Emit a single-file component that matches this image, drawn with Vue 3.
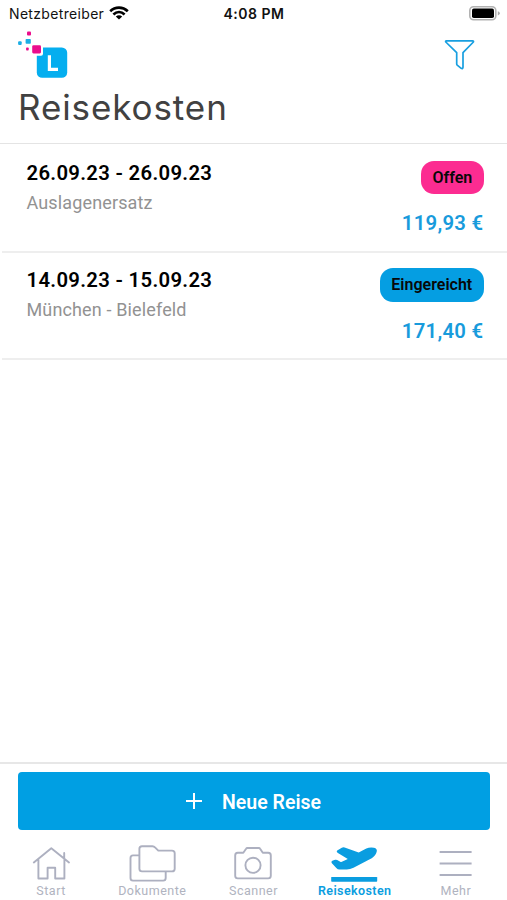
<script setup>
const trips = [
  { dates: '26.09.23 - 26.09.23', place: 'Auslagenersatz', status: 'Offen', kind: 'open', amount: '119,93 €' },
  { dates: '14.09.23 - 15.09.23', place: 'München - Bielefeld', status: 'Eingereicht', kind: 'submitted', amount: '171,40 €' },
]
</script>

<template>
  <div class="screen">
    <div class="status">
      <div class="carrier">
        <span>Netzbetreiber</span>
        <svg width="20" height="14" viewBox="0 0 20 14">
          <g fill="none" stroke="#000" stroke-width="2.7">
            <path d="M1.2 5.2C6.2.5 13.8.5 18.8 5.2" />
            <path d="M4.4 8.4C7.7 5.4 12.3 5.4 15.6 8.4" />
          </g>
          <path d="M6.8 10.4Q10 8 13.2 10.4L10 13.6Z" />
        </svg>
      </div>
      <span class="time">4:08 PM</span>
      <svg class="battery" width="32" height="15" viewBox="0 0 32 15">
        <rect x=".8" y=".8" width="26" height="13" rx="3.8" fill="#fff" stroke="#b2b2b2" stroke-width="1.6" />
        <rect x="3" y="2.6" width="22" height="9.4" rx="1.8" fill="#000" />
        <path d="M28.8 5.2Q30.8 5.7 30.8 7.3T28.8 9.4Z" fill="#aaa" />
      </svg>
    </div>

    <header class="header">
      <div class="brand">
        <svg width="52" height="49" viewBox="0 0 52 49">
          <rect x="18.8" y="17.4" width="30.4" height="30.4" rx="5.4" fill="#05aeef" />
          <rect x="12.4" y="14" width="12.6" height="11.8" rx="2" fill="#fff" />
          <rect x="14.2" y="15.2" width="8.8" height="8.2" rx="1.3" fill="#eb0c8c" />
          <rect x="9" y="1.6" width="4" height="4" rx="1" fill="#eb0c8c" />
          <rect x="7.6" y="9" width="5.2" height="4.8" rx=".8" fill="#1caee5" />
          <rect x=".1" y="11.3" width="3.6" height="3.6" rx="1" fill="#1caee5" />
          <rect x="8.1" y="17.6" width="2.6" height="2.8" rx=".7" fill="#eb0c8c" />
          <path d="M31.4 25.2V39.4H40" fill="none" stroke="#fff" stroke-width="3.2" />
        </svg>
        <svg class="filter" width="32" height="32" viewBox="0 0 32 32">
          <path d="M2.4 1.8H28.6Q29.9 1.8 29.4 3L19 13.7V28.1Q18.8 30.2 17.2 29.3L13.2 26.2Q12.7 25.8 12.7 25V13.7L1.8 3Q1.2 1.8 2.4 1.8Z" fill="none" stroke="#189fe0" stroke-width="1.7" stroke-linejoin="round" />
        </svg>
      </div>
      <h1>Reisekosten</h1>
    </header>

    <main class="list">
      <article v-for="trip in trips" :key="trip.dates" class="trip">
        <div class="info">
          <div class="dates">{{ trip.dates }}</div>
          <div class="place">{{ trip.place }}</div>
        </div>
        <div class="side">
          <span class="badge" :class="trip.kind">{{ trip.status }}</span>
          <span class="amount">{{ trip.amount }}</span>
        </div>
      </article>
    </main>

    <footer class="footer">
      <button class="new">
        <svg width="16" height="16" viewBox="0 0 16 16"><path d="M8 0V16M0 8H16" stroke="#fff" stroke-width="2" /></svg>
        <span>Neue Reise</span>
      </button>
      <nav class="tabs">
        <a class="tab">
          <svg width="40" height="38" viewBox="0 0 40 38">
            <g fill="none" stroke="#adb0c0" stroke-width="1.9" stroke-linejoin="round" stroke-linecap="round">
              <path d="M2.8 18.4L20.3 4.3L38 18.4M7.4 15.4V34.5H16.6V23.8H24.2V34.5H33.4V15.4M33.2 14.2V9" />
            </g>
          </svg>
          <span>Start</span>
        </a>
        <a class="tab">
          <svg width="48" height="38" viewBox="0 0 48 38">
            <g fill="none" stroke="#adb0c0" stroke-width="1.9" stroke-linejoin="round">
              <path d="M11.2 11.4H5Q2.5 11.4 2.5 14V34Q2.5 36.6 5 36.6H35.2Q37.7 36.6 37.7 34V27.4" />
              <path d="M14 2.2H24.4Q26 2.2 27 3.4L30.3 6.6H44Q46.7 6.6 46.7 9.3V24.7Q46.7 27.4 44 27.4H14Q11.4 27.4 11.4 24.8V4.8Q11.4 2.2 14 2.2Z" />
            </g>
          </svg>
          <span>Dokumente</span>
        </a>
        <a class="tab">
          <svg width="40" height="38" viewBox="0 0 40 38">
            <g fill="none" stroke="#adb0c0" stroke-width="1.9" stroke-linejoin="round">
              <path d="M4.7 8.8H10.3L13.1 4.7Q13.5 4 14.4 4H25.8Q26.7 4 27.1 4.7L29.8 8.8H35.2Q37.8 8.8 37.8 11.4V31.8Q37.8 34.4 35.2 34.4H4.7Q2.2 34.4 2.2 31.8V11.4Q2.2 8.8 4.7 8.8Z" />
              <circle cx="20" cy="21.3" r="7.6" />
            </g>
          </svg>
          <span>Scanner</span>
        </a>
        <a class="tab active">
          <svg width="48" height="38" viewBox="0 0 48 38">
            <path d="M7.2 6.6L11.8 3.7Q13 3 14.6 3.5L28.7 8.4L36.3 4.6Q39.7 3 44 3.8Q47.5 4.6 46.7 7.8Q45.8 11.6 41.7 14.2L23.5 23.8Q20 25.6 16.8 25.6H9.7Q7.6 25.6 6.3 24L1.7 19Q.8 17.6 2.3 16.8L5.1 15.8Q6.1 15.4 7.2 16L10.3 17.7Q11.3 18.2 12.4 17.6L17.8 15L7.5 8.8Q6 7.6 7.2 6.6Z" fill="#0a9de0" />
            <rect x="1.2" y="32.9" width="46" height="4.8" rx=".7" fill="#0a9de0" />
          </svg>
          <span>Reisekosten</span>
        </a>
        <a class="tab">
          <svg width="40" height="38" viewBox="0 0 40 38">
            <path d="M4.6 8H36.6M4.6 19.5H36.6M4.6 31H36.6" stroke="#adb0c0" stroke-width="2.2" />
          </svg>
          <span>Mehr</span>
        </a>
      </nav>
    </footer>
  </div>
</template>

<style>
body {
  margin: 0;
  background: #fff;
}
</style>

<style scoped>
.screen {
  box-sizing: border-box;
  width: 507px;
  height: 900px;
  display: flex;
  flex-direction: column;
  background: #fff;
  font-family: Roboto, sans-serif;
  overflow: hidden;
}
svg {
  display: block;
  flex: none;
}
.status {
  display: grid;
  grid-template-columns: 1fr auto 1fr;
  align-items: center;
  height: 27px;
  padding: 0 6px 0 9px;
  box-sizing: border-box;
  font: 400 14px/27px Inter, sans-serif;
  letter-spacing: .33px;
  color: #111;
}
.carrier {
  display: flex;
  align-items: center;
  gap: 5px;
}
.carrier svg {
  margin-top: -2px;
}
.time {
  margin-left: -2px;
  font-weight: 600;
  letter-spacing: .5px;
}
.battery {
  justify-self: end;
}
.header {
  height: 117px;
  box-sizing: border-box;
  border-bottom: 1px solid #e4e4e4;
  padding: 3px 31px 0 18px;
}
.brand {
  display: flex;
  justify-content: space-between;
  align-items: flex-start;
}
.filter {
  margin-top: 9px;
}
h1 {
  margin: 6px 0 0;
  font: 400 35px/44px Inter, sans-serif;
  letter-spacing: .9px;
  color: #414141;
  white-space: nowrap;
}
.list {
  flex: 1;
  padding-left: 2px;
}
.trip {
  display: flex;
  justify-content: space-between;
  box-sizing: border-box;
  height: 109px;
  padding: 17px 23.5px 0 24.5px;
  border-bottom: 2px solid #eee;
}
.trip + .trip {
  height: 107px;
  padding-top: 15px;
}
.dates {
  font-size: 20.3px;
  line-height: 24px;
  font-weight: 600;
  letter-spacing: .32px;
  color: #000;
}
.place {
  margin-top: 6px;
  font-size: 18px;
  line-height: 24px;
  letter-spacing: .14px;
  color: #929292;
}
.side {
  display: flex;
  flex-direction: column;
  align-items: flex-end;
}
.badge {
  height: 33px;
  padding: 0 11.3px;
  border-radius: 13px;
  font-size: 16px;
  line-height: 34px;
  font-weight: 600;
  color: #080808;
}
.trip + .trip .badge {
  height: 34px;
}
.open {
  background: #fc2c91;
}
.submitted {
  background: #059ee2;
}
.amount {
  margin-top: 17px;
  font-size: 20.3px;
  line-height: 24px;
  font-weight: 600;
  letter-spacing: .3px;
  color: #189bdc;
}
.footer {
  box-sizing: border-box;
  height: 138px;
  border-top: 2px solid #e7e7e7;
  padding-top: 8px;
}
.new {
  display: flex;
  align-items: center;
  justify-content: center;
  gap: 20px;
  width: 472px;
  height: 58px;
  margin: 0 0 0 18px;
  padding: 4px 1px 0 0;
  border: 0;
  border-radius: 4px;
  background: #009fe3;
  color: #fff;
  font: 600 19.5px/24px Roboto, sans-serif;
}
.new svg {
  margin-top: -4px;
}
.tabs {
  display: grid;
  grid-template-columns: repeat(5, 1fr);
  padding: 14px 1px 0 0;
}
.tab {
  display: flex;
  flex-direction: column;
  align-items: center;
  font-size: 12.5px;
  line-height: 16px;
  letter-spacing: .5px;
  color: #b0b3c0;
}
.tab span {
  margin: 1px 0 0 1px;
}
.active {
  color: #0a9de0;
  font-weight: 600;
  letter-spacing: .4px;
}
</style>
